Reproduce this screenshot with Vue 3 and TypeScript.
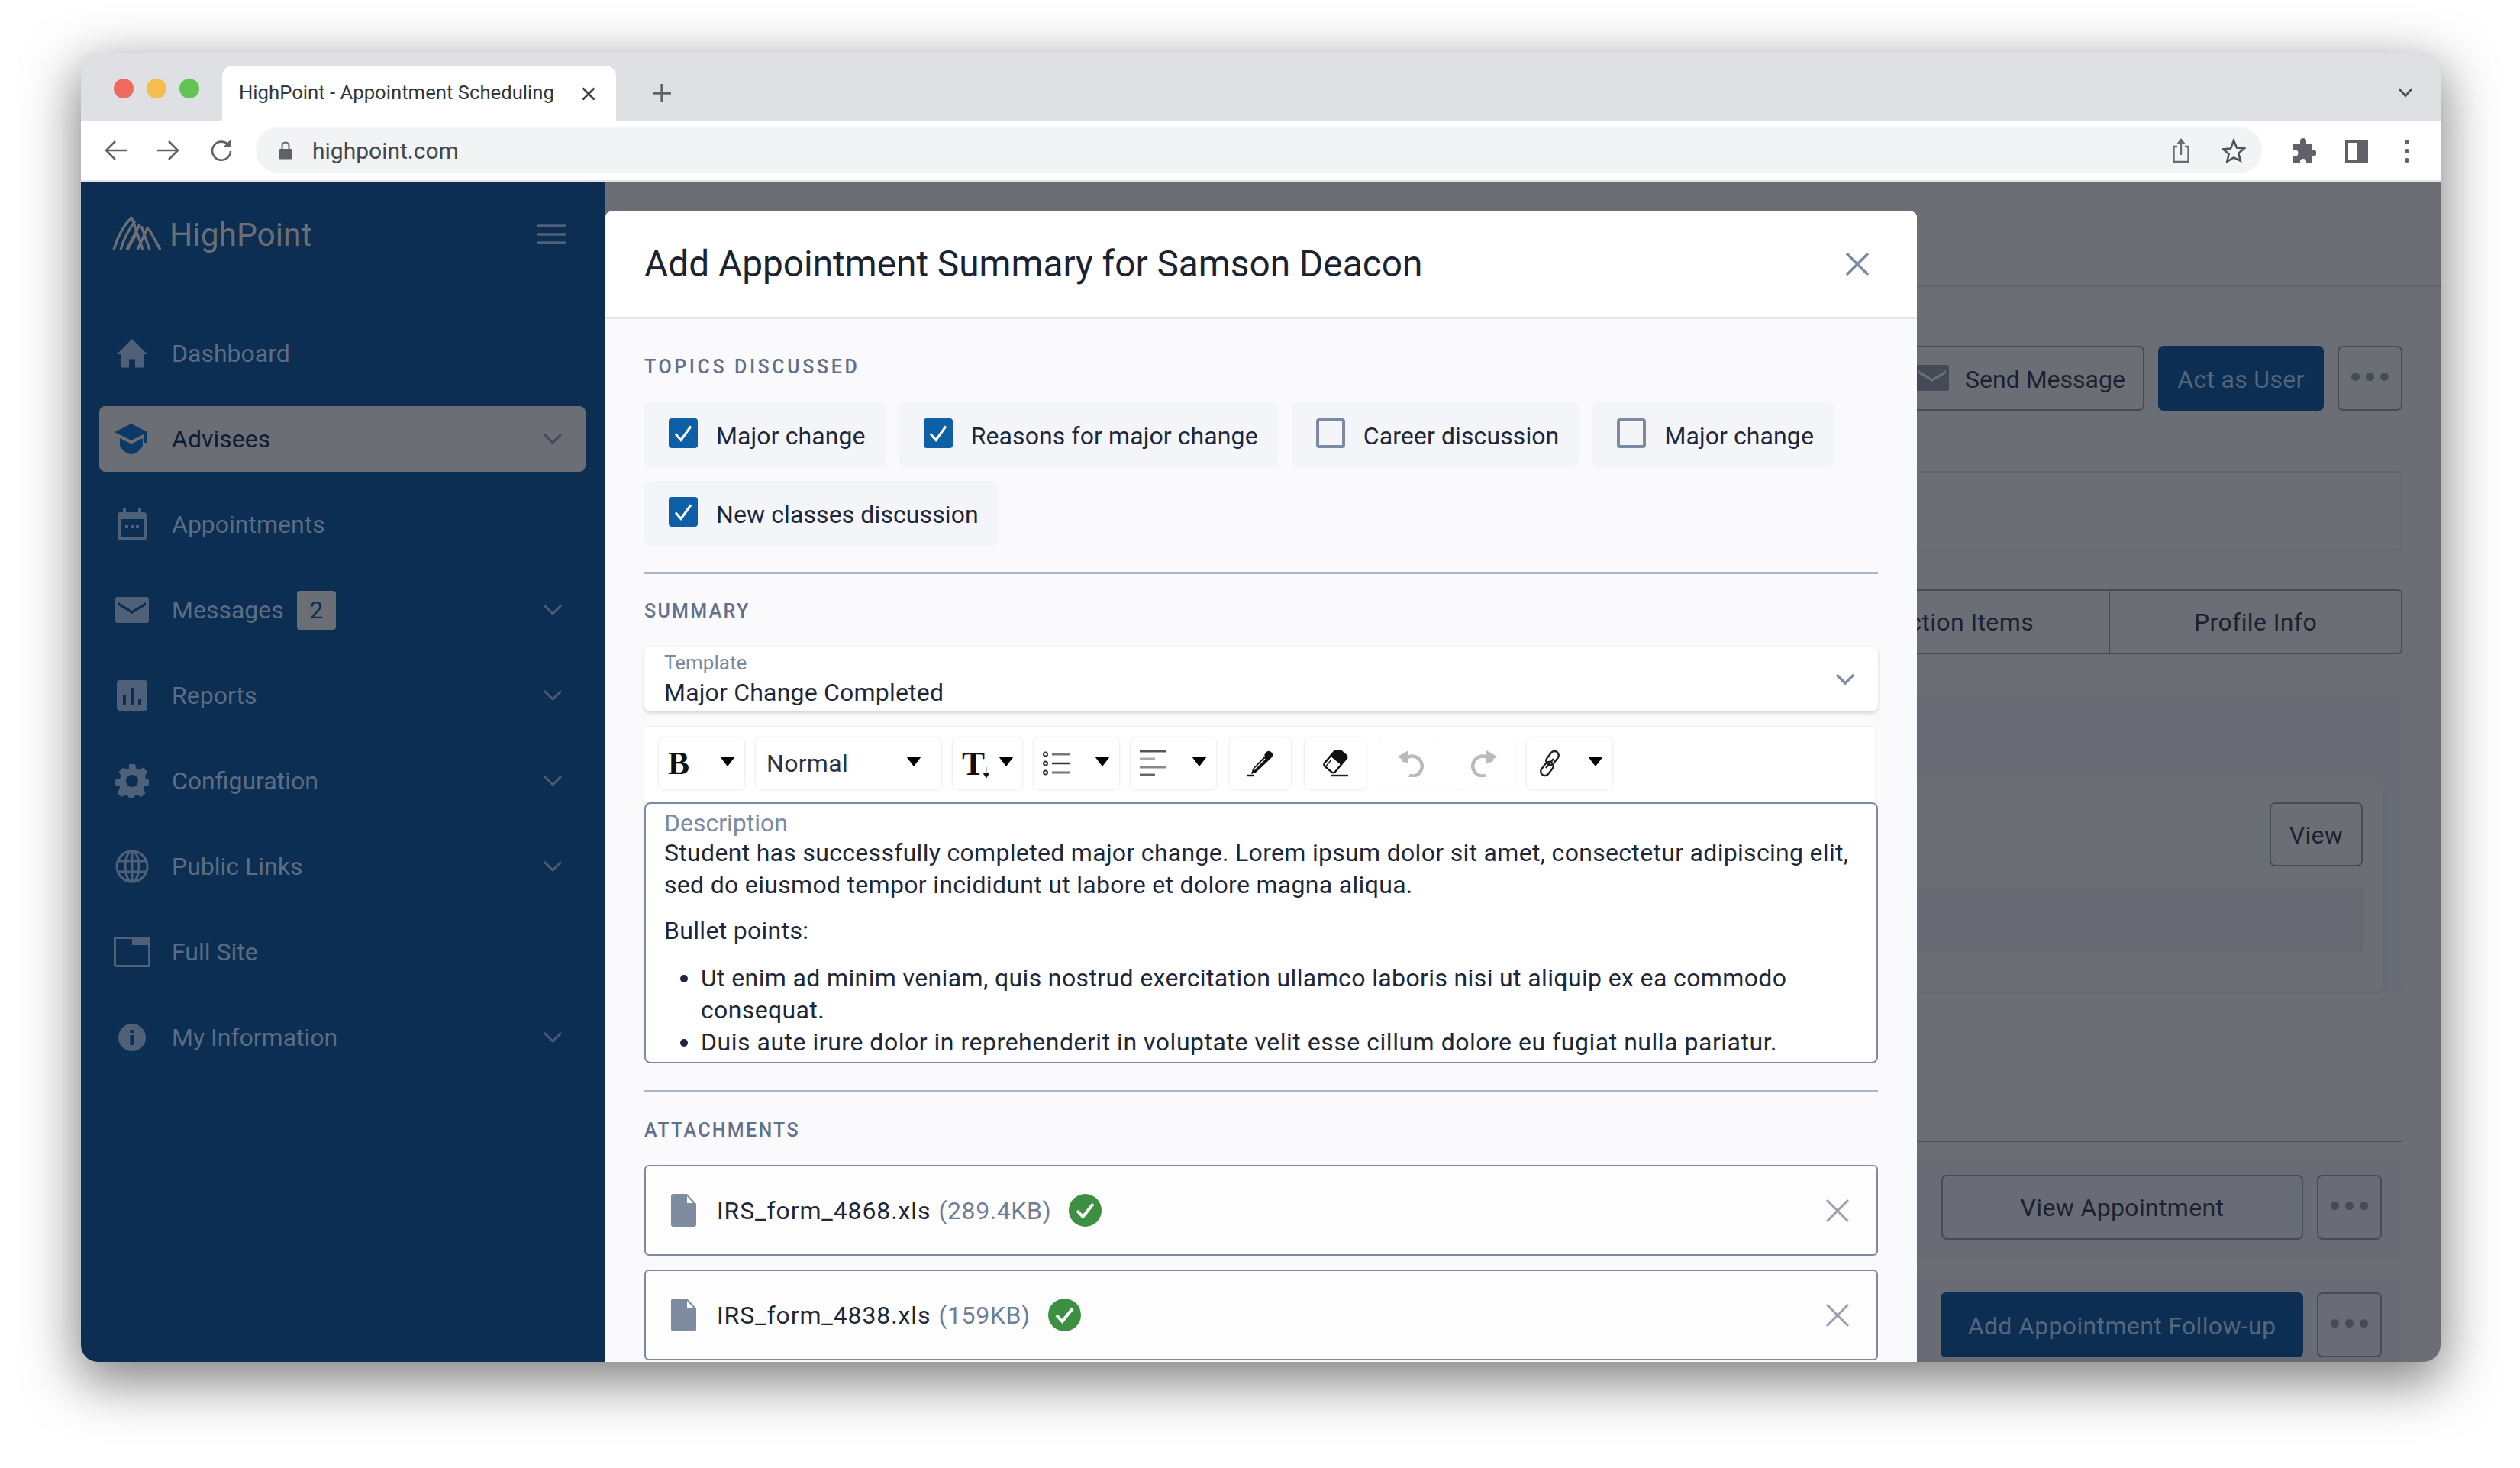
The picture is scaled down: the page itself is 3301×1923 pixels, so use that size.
<script setup lang="ts">
interface NavItem { label: string; icon: string; chevron: boolean; badge?: string; active?: boolean }
const nav: NavItem[] = [
  { label: 'Dashboard', icon: 'home', chevron: false },
  { label: 'Advisees', icon: 'cap', chevron: true, active: true },
  { label: 'Appointments', icon: 'cal', chevron: false },
  { label: 'Messages', icon: 'mail', chevron: true, badge: '2' },
  { label: 'Reports', icon: 'chart', chevron: true },
  { label: 'Configuration', icon: 'gear', chevron: true },
  { label: 'Public Links', icon: 'globe', chevron: true },
  { label: 'Full Site', icon: 'site', chevron: false },
  { label: 'My Information', icon: 'info', chevron: true },
]
const topics = [
  { label: 'Major change', on: true },
  { label: 'Reasons for major change', on: true },
  { label: 'Career discussion', on: false },
  { label: 'Major change', on: false },
  { label: 'New classes discussion', on: true },
]
const files = [
  { name: 'IRS_form_4868.xls', size: '(289.4KB)' },
  { name: 'IRS_form_4838.xls', size: '(159KB)' },
]
</script>

<template>
  <div class="page">
    <div class="window">
      <div class="tabbar">
        <div class="lights"><i class="l red"></i><i class="l yellow"></i><i class="l green"></i></div>
        <div class="tab">
          <span class="tab-title">HighPoint - Appointment Scheduling</span>
          <svg class="tab-x" viewBox="0 0 16 16"><path d="M2 2l12 12M14 2L2 14" stroke="#3c4043" stroke-width="2" fill="none" /></svg>
        </div>
        <svg class="tab-plus" viewBox="0 0 24 24"><path d="M12 1v22M1 12h22" stroke="#5f6368" stroke-width="3" fill="none" /></svg>
        <svg class="tab-chev" viewBox="0 0 24 24"><path d="M3 7l9 10 9-10" stroke="#4b4e53" stroke-width="3" fill="none" /></svg>
      </div>
      <div class="toolbar">
        <svg class="nav-ic" viewBox="0 0 32 32"><path d="M30 16H3M15 4L3 16l12 12" stroke="#5f6368" stroke-width="2.6" fill="none" /></svg>
        <svg class="nav-ic" viewBox="0 0 32 32"><path d="M2 16h27M17 4l12 12-12 12" stroke="#5f6368" stroke-width="2.6" fill="none" /></svg>
        <svg class="nav-ic" viewBox="0 0 32 32"><path d="M26 10A12 12 0 1 0 28 17" stroke="#5f6368" stroke-width="2.6" fill="none" /><path d="M28 2v10H18z" fill="#5f6368" /></svg>
        <div class="url">
          <svg class="lock" viewBox="0 0 18 24"><path d="M2 10h14a1.500 1.500 0 0 1 1.500 1.500V22a1.500 1.500 0 0 1-1.500 1.500H2A1.500 1.500 0 0 1 .5 22V11.500A1.500 1.500 0 0 1 2 10z" fill="#5f6368" /><path d="M4.500 10V6a4.500 4.500 0 0 1 9 0v4" stroke="#5f6368" stroke-width="2" fill="none" /></svg>
          <span class="url-text">highpoint.com</span>
          <span class="grow"></span>
          <svg class="share" viewBox="0 0 26 34"><path d="M8 12H3.500v20h19V12H18" stroke="#6a6d72" stroke-width="2.400" fill="none" stroke-linejoin="round" /><path d="M13 23V3" stroke="#6a6d72" stroke-width="2.400" /><path d="M7.500 8L13 1l5.500 7z" fill="#6a6d72" /></svg>
          <svg class="star" viewBox="0 0 32 32"><path d="M16 3l4 9.500 10 .8-7.600 6.500 2.300 9.900L16 25.400 7.300 30.700l2.300-9.900L2 14.300l10-.8z" stroke="#4f5257" stroke-width="2.600" fill="none" /></svg>
        </div>
        <svg class="puzzle" viewBox="0 0 34 34"><path d="M13 4a4 4 0 0 1 8 0v3h8v8h1a4.500 4.500 0 0 1 0 9h-1v9h-8v-2a4 4 0 0 0-8 0v2H4v-9h2a4.500 4.500 0 0 0 0-9H4V7h9z" fill="#5f6368" /></svg>
        <div class="panel-ic"><i></i></div>
        <svg class="dots-v" viewBox="0 0 8 32"><circle cx="4" cy="4" r="3" fill="#5f6368" /><circle cx="4" cy="16" r="3" fill="#5f6368" /><circle cx="4" cy="28" r="3" fill="#5f6368" /></svg>
      </div>

      <div class="app">
        <aside class="side">
          <div class="brand">
            <svg class="logo" viewBox="0 0 64 46">
              <g stroke="#6b6e75" fill="none" stroke-width="3.400">
                <path d="M2 45C7 28 15 13 26 2" />
                <path d="M11 45C15 31 21 19 30 8" />
                <path d="M20 45C24 36 28 30 33 23" />
                <path d="M26 4l14 41M36 12l-17 33M38 14l11 31M47 15l-14 30M48 18l15 27" />
              </g>
            </svg>
            <span class="brand-name">HighPoint</span>
            <svg class="burger" viewBox="0 0 38 26"><path d="M0 2h38M0 13h38M0 24h38" stroke="#4f6079" stroke-width="3.400" /></svg>
          </div>
          <nav class="nav">
            <div v-for="item in nav" :key="item.label" class="nav-item" :class="{ active: item.active }">
              <span class="nav-icon">
                <svg v-if="item.icon === 'home'" viewBox="0 0 40 38"><path d="M20 0L0 20h5v17.500h11v-11h8v11h11V20h5z" /></svg>
                <svg v-else-if="item.icon === 'cap'" viewBox="0 0 46 40"><path d="M22 0L0 11l22 11 17-8.500V25h4V11z" /><path d="M7 19v9c0 3 8 12 15 12s15-9 15-12v-9l-15 7.500z" /></svg>
                <svg v-else-if="item.icon === 'cal'" viewBox="0 0 40 42"><path fill-rule="evenodd" d="M8 0h4v5h16V0h4v5h3a4 4 0 0 1 4 4v29a4 4 0 0 1-4 4H5a4 4 0 0 1-4-4V9a4 4 0 0 1 4-4h3zM5 14v24h30V14z" /><path d="M11 22h4v4h-4zM18 22h4v4h-4zM25 22h4v4h-4z" /></svg>
                <svg v-else-if="item.icon === 'mail'" viewBox="0 0 44 34"><path fill-rule="evenodd" d="M3 0h38a3 3 0 0 1 3 3v28a3 3 0 0 1-3 3H3a3 3 0 0 1-3-3V3a3 3 0 0 1 3-3zM4 7v4l18 11 18-11V7L22 18z" /></svg>
                <svg v-else-if="item.icon === 'chart'" viewBox="0 0 40 40"><path fill-rule="evenodd" d="M4 0h32a4 4 0 0 1 4 4v32a4 4 0 0 1-4 4H4a4 4 0 0 1-4-4V4a4 4 0 0 1 4-4zM8 19v13h4V19zM18 10v22h4V10zM28 24v8h4v-8z" /></svg>
                <svg v-else-if="item.icon === 'gear'" viewBox="0 0 44 44"><path fill-rule="evenodd" d="M18 0h8l1.500 6 3.500 1.500 5.500-3 5.500 5.500-3 5.500L40 19l4 1.500v7L38 29l-1.500 3.500 3 5.500-5.500 5-5.500-3-3 1.500L24 44h-6l-1.500-2.500-3-1.500-5.500 3-5.500-5 3-5.500L6 29l-6-1.500v-7L6 19l1.500-3.500-3-5.500L10 4.500l5.500 3L18 6zM22 14a8 8 0 1 0 0 16 8 8 0 0 0 0-16z" /></svg>
                <svg v-else-if="item.icon === 'globe'" viewBox="0 0 44 44"><g fill="none" stroke="#4f6079" stroke-width="3"><circle cx="22" cy="22" r="20" /><ellipse cx="22" cy="22" rx="9" ry="20" /><path d="M3 15h38M3 29h38M22 2v40" /></g></svg>
                <svg v-else-if="item.icon === 'site'" viewBox="0 0 48 40"><path fill-rule="evenodd" d="M3 0h42a3 3 0 0 1 3 3v34a3 3 0 0 1-3 3H3a3 3 0 0 1-3-3V3a3 3 0 0 1 3-3zM3 3v34h42V11H24V3z" /></svg>
                <svg v-else viewBox="0 0 36 36"><path fill-rule="evenodd" d="M18 0a18 18 0 1 1 0 36 18 18 0 0 1 0-36zM15.500 8v4h5V8zM15.500 15v13h5V15z" /></svg>
              </span>
              <span class="nav-label">{{ item.label }}</span>
              <span v-if="item.badge" class="badge">{{ item.badge }}</span>
              <span class="grow"></span>
              <svg v-if="item.chevron" class="nav-chev" viewBox="0 0 26 16"><path d="M2 2l11 11L24 2" fill="none" stroke-width="3" /></svg>
            </div>
          </nav>
        </aside>

        <main class="main">
          <div class="topbar"></div>
          <div class="content">
            <div class="actions">
              <button class="btn send">
                <svg class="send-ic" viewBox="0 0 44 34"><path fill-rule="evenodd" d="M3 0h38a3 3 0 0 1 3 3v28a3 3 0 0 1-3 3H3a3 3 0 0 1-3-3V3a3 3 0 0 1 3-3zM4 7v4l18 11 18-11V7L22 18z" fill="#454a57" /></svg>
                Send Message
              </button>
              <button class="btn primary act">Act as User</button>
              <button class="btn more"><i></i><i></i><i></i></button>
            </div>
            <div class="panel-top"></div>
            <div class="tabs">
              <div class="tabitem">Action Items</div>
              <div class="tabitem">Profile Info</div>
            </div>
            <section class="outer">
              <div class="inner">
                <div class="inner-head"><button class="btn view">View</button></div>
                <div class="strip"></div>
              </div>
            </section>
            <div class="rule"></div>
            <div class="foot-card first">
              <button class="btn wide">View Appointment</button>
              <button class="btn more"><i></i><i></i><i></i></button>
            </div>
            <div class="foot-card second">
              <button class="btn primary wide">Add Appointment Follow-up</button>
              <button class="btn more"><i></i><i></i><i></i></button>
            </div>
          </div>

          <div class="modal">
            <header class="modal-head">
              <h1>Add Appointment Summary for Samson Deacon</h1>
              <svg class="modal-x" viewBox="0 0 32 32"><path d="M2 2l28 28M30 2L2 30" stroke="#7c8aa3" stroke-width="3.400" fill="none" /></svg>
            </header>
            <div class="modal-body">
              <h2 class="sec first-sec">TOPICS DISCUSSED</h2>
              <div class="chips">
                <label v-for="(t, i) in topics" :key="i" class="chip">
                  <span class="box" :class="{ on: t.on }">
                    <svg v-if="t.on" viewBox="0 0 38 38"><path d="M9 20l7 8L29 10" stroke="#fff" stroke-width="3" fill="none" /></svg>
                  </span>
                  <span class="chip-text">{{ t.label }}</span>
                </label>
              </div>
              <div class="divider d1"></div>
              <h2 class="sec">SUMMARY</h2>
              <div class="select">
                <div>
                  <div class="select-label">Template</div>
                  <div class="select-value">Major Change Completed</div>
                </div>
                <svg class="select-chev" viewBox="0 0 26 16"><path d="M2 2l11 11L24 2" fill="none" stroke="#7c8aa3" stroke-width="3.400" /></svg>
              </div>
              <div class="rte-bar">
                <div class="tool w112"><span class="tool-b">B</span><i class="caret"></i></div>
                <div class="tool w243"><span class="tool-n">Normal</span><i class="caret"></i></div>
                <div class="tool w91 tight"><span class="tool-t">T<svg class="t-arrow" viewBox="0 0 8 14"><path d="M4 0v8M0 8h8L4 14z" fill="#111" stroke="#111" stroke-width=".6" /></svg></span><i class="caret"></i></div>
                <div class="tool w112">
                  <svg class="t-list" viewBox="0 0 36 34"><g fill="none" stroke="#333" stroke-width="2"><circle cx="3.500" cy="5" r="2.500" /><circle cx="3.500" cy="17" r="2.500" /><circle cx="3.500" cy="29" r="2.500" /></g><path d="M12 5h24M12 29h24" stroke="#777" stroke-width="3" /><path d="M12 17h24" stroke="#333" stroke-width="2.500" /></svg>
                  <i class="caret"></i>
                </div>
                <div class="tool w112">
                  <svg class="t-align" viewBox="0 0 34 36"><path d="M0 2h34" stroke="#555" stroke-width="3" /><path d="M0 12h20" stroke="#aaa" stroke-width="3" /><path d="M0 23h34" stroke="#888" stroke-width="3" /><path d="M0 33h20" stroke="#666" stroke-width="3" /></svg>
                  <i class="caret"></i>
                </div>
                <div class="tool w80 icon-only"><svg class="t-ic" viewBox="0 0 36 36"><path d="M26 3a5 5 0 0 1 7 7l-3 3-1 1L12 30l-6 2 2-7L24 8l-1-1z" fill="#111" /><path d="M9 27l15-15" stroke="#fff" stroke-width="1.400" /><path d="M1 34h8" stroke="#111" stroke-width="2.400" /></svg></div>
                <div class="tool w80 icon-only"><svg class="t-ic" viewBox="0 0 36 36"><g transform="rotate(40 18 15)"><rect x="9" y="0" width="18" height="29" rx="3" fill="#fff" stroke="#111" stroke-width="2.400" /><path d="M9 3a3 3 0 0 1 3-3h12a3 3 0 0 1 3 3v11H9z" fill="#111" /><path d="M13 17v12" stroke="#111" stroke-width="1.400" /></g><path d="M12 34h23" stroke="#222" stroke-width="2.400" /></svg></div>
                <div class="tool w80 icon-only faint"><svg class="t-ic" viewBox="0 0 36 36"><path d="M9 16A13 13 0 1 1 17 34" fill="none" stroke="#bbb" stroke-width="4.500" /><path d="M16 1v18L2 9z" fill="#bbb" /></svg></div>
                <div class="tool w80 icon-only faint"><svg class="t-ic" viewBox="0 0 36 36"><path d="M27 16A13 13 0 1 0 19 34" fill="none" stroke="#bbb" stroke-width="4.500" /><path d="M20 1v18L34 9z" fill="#bbb" /></svg></div>
                <div class="tool w112">
                  <svg class="t-link" viewBox="0 0 36 36"><g fill="none" stroke="#222" stroke-width="2.400"><rect x="16" y="1" width="11" height="20" rx="5.500" transform="rotate(38 21.500 11)" /><rect x="9" y="15" width="11" height="20" rx="5.500" transform="rotate(38 14.500 25)" /><path d="M13 24l10-12" /></g></svg>
                  <i class="caret"></i>
                </div>
              </div>
              <div class="editor">
                <div class="editor-label">Description</div>
                <p>Student has successfully completed major change. Lorem ipsum dolor sit amet, consectetur adipiscing elit, sed do eiusmod tempor incididunt ut labore et dolore magna aliqua.</p>
                <p class="tight-p">Bullet points:</p>
                <ul>
                  <li class="li-a">Ut enim ad minim veniam, quis nostrud exercitation ullamco laboris nisi ut aliquip ex ea commodo consequat.</li>
                  <li class="li-b">Duis aute irure dolor in reprehenderit in voluptate velit esse cillum dolore eu fugiat nulla pariatur.</li>
                </ul>
              </div>
              <div class="divider d2"></div>
              <h2 class="sec">ATTACHMENTS</h2>
              <div v-for="f in files" :key="f.name" class="file">
                <svg class="file-ic" viewBox="0 0 33 43"><path fill-rule="evenodd" d="M3 0h18l12 13v27a3 3 0 0 1-3 3H3a3 3 0 0 1-3-3V3a3 3 0 0 1 3-3zM21 3v9h8z" fill="#7f8ba1" /></svg>
                <span class="file-name">{{ f.name }}</span>
                <span class="file-size">{{ f.size }}</span>
                <svg class="file-ok" viewBox="0 0 43 43"><circle cx="21.500" cy="21.500" r="21.500" fill="#3d8f41" /><path d="M11 22l7.500 8L32 13" stroke="#fff" stroke-width="4" fill="none" /></svg>
                <span class="grow"></span>
                <svg class="file-x" viewBox="0 0 30 30"><path d="M1 1l28 28M29 1L1 29" stroke="#9a9fae" stroke-width="3" fill="none" /></svg>
              </div>
            </div>
          </div>
        </main>
      </div>
    </div>
  </div>
</template>

<style>
html, body { margin: 0; background: #fff; }
</style>

<style scoped>
.page { box-sizing: border-box; width: 3301px; height: 1923px; padding: 69px 0 0 106px; background: #fff; overflow: hidden; font-family: Roboto, "Liberation Sans", sans-serif; color: #1e2738; }
.window { width: 3091px; height: 1715px; border-radius: 22px; overflow: hidden; display: flex; flex-direction: column; box-shadow: 0 22px 70px 4px rgba(0, 0, 0, .5); background: #dfe0e4; }
.grow { flex: 1; }
.tabbar { height: 90px; flex: none; display: flex; align-items: flex-end; background: #dfe0e4; }
.lights { display: flex; gap: 17px; align-self: flex-start; margin: 34px 31px 0 43px; }
.l { width: 26px; height: 26px; border-radius: 50%; display: block; }
.red { background: #ee6a5f; } .yellow { background: #f5bd4f; } .green { background: #61c454; }
.tab { width: 516px; height: 73px; box-sizing: border-box; background: #fff; border-radius: 14px 14px 0 0; display: flex; align-items: center; padding: 0 26px 0 22px; justify-content: space-between; margin-left: -1px; }
.tab-title { font-size: 25.700px; color: #33363b; white-space: nowrap; margin-top: -3px; }
.tab-x { width: 20px; height: 20px; margin-top: 1px; }
.tab-plus { width: 26px; height: 26px; margin: 0 0 24px 47px; }
.tab-chev { width: 22px; height: 22px; margin: 0 35px 27px auto; }
.toolbar { height: 79px; flex: none; box-sizing: border-box; background: #fff; border-bottom: 2px solid #e3e3e5; display: flex; align-items: center; padding: 0 31px 0 31px; }
.nav-ic { width: 32px; height: 32px; margin-right: 37px; flex: none; margin-top: -1px; margin-left: -1px; }
.nav-ic:nth-of-type(3) { margin-right: 0; margin-left: 1px; }
.url { height: 61px; width: 2628px; margin: -2px 0 0 29px; flex: none; background: #f1f3f4; border-radius: 31px; display: flex; align-items: center; padding-left: 30px; box-sizing: border-box; }
.lock { width: 18px; height: 24px; }
.url-text { font-size: 30px; color: #45484d; margin-left: 26px; margin-top: 1px; }
.share { width: 26px; height: 34px; margin-right: 40px; }
.star { width: 32px; height: 32px; margin-right: 21px; }
.puzzle { width: 34px; height: 34px; margin-left: 37px; flex: none; }
.panel-ic { width: 30px; height: 30px; margin-left: 38px; flex: none; box-sizing: border-box; border: 4px solid #5f6368; background: #fff; display: flex; justify-content: flex-end; }
.panel-ic i { width: 11px; background: #5f6368; display: block; }
.dots-v { width: 8px; height: 32px; margin-left: 47px; flex: none; }

.app { flex: 1; display: flex; min-height: 0; }
.side { width: 687px; flex: none; background: #0b2e52; box-sizing: border-box; padding: 0 26px 0 24px; }
.brand { height: 138px; display: flex; align-items: center; padding-left: 17px; padding-right: 25px; margin-bottom: 44px; }
.logo { width: 64px; height: 46px; margin-top: -4px; }
.brand-name { font-size: 42.500px; color: #6b6e75; margin-left: 11px; flex: 1; }
.burger { width: 38px; height: 26px; }
.nav { display: flex; flex-direction: column; gap: 26px; }
.nav-item { height: 86px; display: flex; align-items: center; padding: 0 30px 0 19px; border-radius: 8px; color: #5b6c83; font-size: 32px; }
.nav-item.active { background: #6b6e75; color: #0e1d33; }
.nav-icon { width: 48px; height: 48px; display: flex; align-items: center; justify-content: center; margin-right: 28px; flex: none; }
.nav-icon svg { max-width: 48px; max-height: 44px; fill: #4f6079; }
.nav-item:nth-child(1) .nav-icon svg { width: 40px; }
.nav-item:nth-child(2) .nav-icon svg { width: 46px; fill: #0b3a67; }
.nav-item:nth-child(3) .nav-icon svg { width: 40px; }
.nav-item:nth-child(4) .nav-icon svg { width: 44px; }
.nav-item:nth-child(5) .nav-icon svg { width: 40px; }
.nav-item:nth-child(6) .nav-icon svg,
.nav-item:nth-child(7) .nav-icon svg { width: 44px; }
.nav-item:nth-child(8) .nav-icon svg { width: 48px; }
.nav-item:nth-child(9) .nav-icon svg { width: 36px; }
.badge { width: 51px; height: 51px; background: #6b6e75; color: #0b2e52; border-radius: 4px; display: flex; align-items: center; justify-content: center; margin-left: 17px; }
.nav-chev { width: 26px; height: 16px; stroke: #4a5b74; }
.active .nav-chev { stroke: #3f4a5f; }

.main { flex: 1; position: relative; background: #6b6e75; overflow: hidden; min-width: 0; }
.topbar { height: 138px; border-bottom: 3px solid #5f626b; box-sizing: border-box; }
.content { display: flex; flex-direction: column; padding: 77px 50px 0 0; align-items: flex-end; }
.btn { font: inherit; font-size: 32px; letter-spacing: .3px; background: transparent; border: 2px solid #474b58; border-radius: 7px; color: #1b2130; box-sizing: border-box; height: 85px; display: flex; align-items: center; justify-content: center; padding: 2px 0 0; }
.actions { display: flex; gap: 18px; height: 85px; }
.send { width: 320px; gap: 21px; justify-content: flex-start; padding-left: 18px; position: relative; letter-spacing: 0; }
.send-ic { width: 44px; height: 34px; margin-top: -4px; }
.primary { background: #0b2e52; border-color: #0b2e52; color: #54657e; }
.act { width: 217px; }
.more { width: 85px; gap: 8px; padding: 0 0 4px; }
.more i { width: 11px; height: 11px; border-radius: 50%; background: #474b58; display: block; }
.panel-top { width: 2000px; height: 105px; margin-top: 79px; border: 2px solid #636670; border-radius: 6px; box-sizing: border-box; }
.tabs { width: 2000px; height: 85px; margin-top: 50px; display: flex; justify-content: flex-end; border: 2px solid #474b58; box-sizing: border-box; border-radius: 6px; }
.tabitem { width: 381px; display: flex; align-items: center; justify-content: center; font-size: 32px; letter-spacing: .4px; color: #1b2130; }
.tabitem + .tabitem { border-left: 2px solid #474b58; }
.outer { width: 2000px; height: 389px; margin-top: 53px; background: #696c74; border-radius: 8px; box-sizing: border-box; padding: 115px 25px 26px 0; }
.inner { height: 248px; background: #6b6e75; box-shadow: 0 2px 3px #63666e; border-radius: 8px; padding: 26px 27px 0 0; display: flex; flex-direction: column; }
.inner-head { display: flex; justify-content: flex-end; }
.view { width: 122px; height: 84px; }
.strip { height: 84px; margin-top: 28px; background: #666971; border-radius: 4px; }
.rule { width: 2000px; height: 2px; margin-top: 195px; background: #4b4f5b; }
.foot-card { width: 2000px; height: 138px; margin-top: 16px; background: #696c74; border-radius: 8px; display: flex; justify-content: flex-end; align-items: center; gap: 18px; padding-right: 27px; box-sizing: border-box; }
.foot-card.second { margin-top: 19px; height: 150px; align-items: flex-start; padding-top: 24px; }
.wide { width: 474px; letter-spacing: .35px; }
.primary.wide { width: 475px; margin-left: 0; letter-spacing: .35px; }
.foot-card .more { width: 85px; }

.modal { position: absolute; left: 0; top: 39px; bottom: 0; width: 1718px; background: #fafafc; border-radius: 8px 8px 0 0; display: flex; flex-direction: column; overflow: hidden; }
.modal-head { height: 141px; flex: none; box-sizing: border-box; background: #fff; border-bottom: 3px solid #e6e7ec; display: flex; align-items: center; justify-content: space-between; padding: 0 62px 0 51px; }
h1 { margin: 0; font-size: 47.800px; font-weight: 400; color: #1b2230; }
.modal-x { width: 32px; height: 32px; }
.modal-body { padding: 0 51px; flex: 1; }
.sec { margin: 0; font-size: 25px; line-height: 28px; font-weight: 500; letter-spacing: 2.300px; color: #62708a; }
.first-sec { margin-top: 49px; letter-spacing: 3.600px; }
.chips { display: flex; flex-wrap: wrap; gap: 18px 18px; margin-top: 32px; }
.chip { height: 85px; box-sizing: border-box; background: #f4f5f9; border-radius: 8px; padding: 0 26px 0 32px; display: flex; align-items: center; gap: 24px; font-size: 32px; letter-spacing: .1px; color: #1e2738; }
.chip-text { padding-top: 2px; }
.box { width: 38px; height: 39px; box-sizing: border-box; border: 4px solid #7c8aa3; border-radius: 4px; flex: none; margin-top: -4px; display: block; }
.box.on { background: #0f5fa6; border: 0; }
.box svg { display: block; width: 38px; height: 39px; }
.divider { height: 3px; background: #adb6c6; }
.d1 { margin-top: 34px; }
.d1 + .sec { margin-top: 35px; }
.select { height: 85px; margin-top: 32px; background: #fff; border-radius: 8px; box-shadow: 0 2px 4px rgba(60, 70, 90, .22); display: flex; align-items: center; justify-content: space-between; padding: 0 30px 0 26px; }
.select-label { font-size: 26px; line-height: 30px; color: #7c8aa3; }
.select-value { font-size: 32px; line-height: 38px; color: #1e2738; margin-top: 5px; letter-spacing: .2px; }
.select-chev { width: 26px; height: 16px; }
.rte-bar { height: 99px; margin-top: 20px; box-sizing: border-box; background: #fff; box-shadow: 0 0 2px rgba(60, 70, 90, .12); display: flex; align-items: center; gap: 15px; padding: 0 0 3px 19px; margin-right: 4px; }
.tool { height: 68px; box-sizing: border-box; background: #fff; border-radius: 6px; box-shadow: 0 0 3px rgba(60, 70, 90, .2); display: flex; align-items: center; justify-content: space-between; padding: 0 12px; flex: none; }
.w112 { width: 112px; } .w243 { width: 243px; padding-left: 14px; padding-right: 26px; } .w91 { width: 91px; padding-right: 11px; } .w80 { width: 80px; justify-content: center; }
.icon-only { margin-left: 3px; }
.faint { box-shadow: 0 0 2px rgba(60, 70, 90, .1); }
.caret { display: block; width: 0; height: 0; border-left: 10.500px solid transparent; border-right: 10.500px solid transparent; border-top: 13px solid #000; margin-top: -6px; }
.tool-b { font-family: "Liberation Serif", serif; font-weight: 700; font-size: 42px; color: #111; line-height: 1; }
.tool-n { font-size: 32px; letter-spacing: .3px; color: #2b3342; }
.tool-t { font-family: "Liberation Serif", serif; font-weight: 700; font-size: 45px; color: #111; line-height: 1; position: relative; padding-right: 6px; }
.t-arrow { position: absolute; right: 0; bottom: 4px; width: 8px; height: 14px; }
.t-list { width: 36px; height: 34px; }
.t-align { width: 34px; height: 36px; }
.t-ic { width: 36px; height: 36px; }
.t-link { width: 36px; height: 36px; }
.editor { height: 342px; box-sizing: border-box; background: #fff; border: 2px solid #7c8aa3; border-radius: 8px; padding: 7px 24px 0 24px; overflow: hidden; font-size: 32px; line-height: 42px; letter-spacing: .31px; color: #1e2738; }
.editor-label { color: #7c8aa3; line-height: 36px; font-size: 32px; letter-spacing: 0; }
.editor p { margin: 0 0 18px; }
.editor p.tight-p { margin-bottom: 20px; }
.editor ul { margin: 0; padding-left: 48px; }
.li-a { letter-spacing: .37px; }
.li-b { letter-spacing: .52px; }
.d2 { margin-top: 35px; }
.d2 + .sec { margin-top: 36px; }
.file { height: 119px; margin-top: 18px; box-sizing: border-box; background: #fdfdfe; border: 2px solid #7c8aa3; border-radius: 6px; display: flex; align-items: center; padding: 0 36px 0 33px; font-size: 32px; }
.d2 + .sec + .file { margin-top: 31px; }
.file-ic { width: 33px; height: 43px; margin-right: 27px; }
.file-name { color: #1e2738; letter-spacing: .9px; }
.file-size { color: #6f7d96; margin-left: 10px; letter-spacing: .6px; }
.file-ok { width: 43px; height: 43px; margin-left: 23px; }
.file-x { width: 30px; height: 30px; }
</style>
